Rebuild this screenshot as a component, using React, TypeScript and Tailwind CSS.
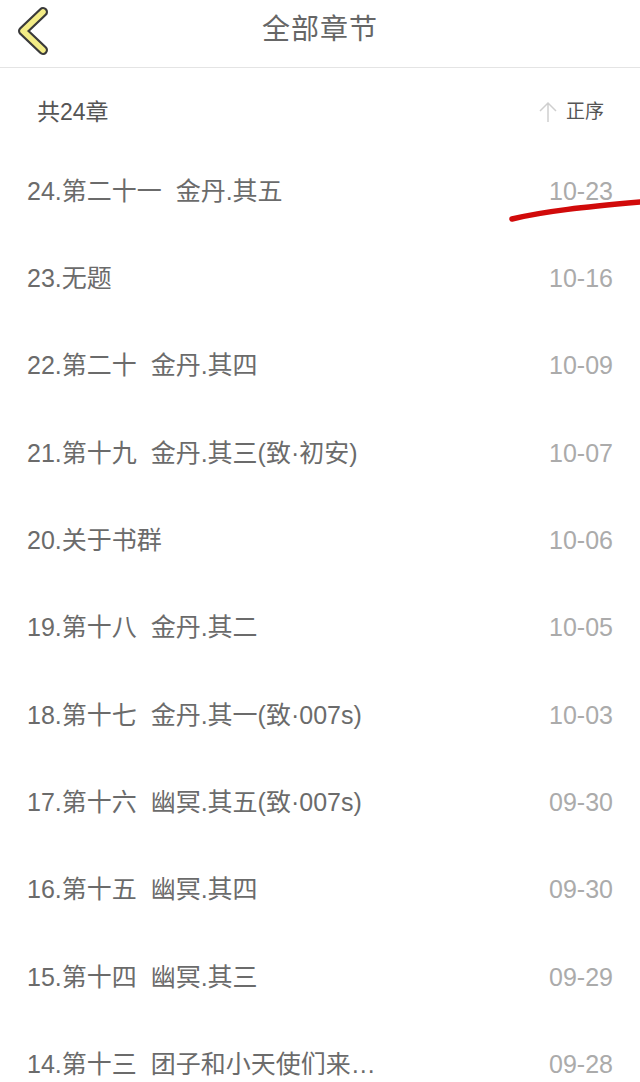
import { useState } from "react";

type Chapter = {
  id: number;
  title: string;
  date: string;
};

const chapters: Chapter[] = [
  { id: 24, title: "24.第二十一  金丹.其五", date: "10-23" },
  { id: 23, title: "23.无题", date: "10-16" },
  { id: 22, title: "22.第二十  金丹.其四", date: "10-09" },
  { id: 21, title: "21.第十九  金丹.其三(致·初安)", date: "10-07" },
  { id: 20, title: "20.关于书群", date: "10-06" },
  { id: 19, title: "19.第十八  金丹.其二", date: "10-05" },
  { id: 18, title: "18.第十七  金丹.其一(致·007s)", date: "10-03" },
  { id: 17, title: "17.第十六  幽冥.其五(致·007s)", date: "09-30" },
  { id: 16, title: "16.第十五  幽冥.其四", date: "09-30" },
  { id: 15, title: "15.第十四  幽冥.其三", date: "09-29" },
  { id: 14, title: "14.第十三  团子和小天使们来…", date: "09-28" },
];

const font = {
  fontFamily: '"Liberation Sans", "Noto Sans CJK SC", sans-serif',
};

const App = () => {
  const [asc, setAsc] = useState(true);

  return (
    <div className="relative w-[640px] h-[1082px] overflow-hidden bg-white" style={font}>
      <div className="relative h-[68px] flex items-center justify-center border-b border-[#e4e4e4]">
        <button className="absolute left-[12px] top-[4px] w-[44px] h-[52px]">
          <svg width="44" height="52" viewBox="0 0 44 52">
            <path
              d="M31 8 L11 27 L31 46"
              fill="none"
              stroke="#3a3a3a"
              strokeWidth="10"
              strokeLinecap="round"
              strokeLinejoin="round"
            />
            <path
              d="M31 8 L11 27 L31 46"
              fill="none"
              stroke="#f3ec86"
              strokeWidth="5.5"
              strokeLinecap="round"
              strokeLinejoin="round"
            />
          </svg>
        </button>
        <h1 className="text-[28px] text-[#666] mt-[-8px] tracking-[1px]">全部章节</h1>
      </div>

      <div className="h-[80px] flex items-center justify-between pt-[8px] pl-[37px] pr-[36px]">
        <span className="text-[23px] text-[#555]">共24章</span>
        <div className="flex items-center gap-[8px] cursor-pointer" onClick={() => setAsc(!asc)}>
          <svg width="20" height="22" viewBox="0 0 20 22">
            <path d="M10 2 V21 M2 10 L10 2 L18 10" fill="none" stroke="#cfcfcf" strokeWidth="1.5" />
          </svg>
          <span className="text-[19px] text-[#555]">{asc ? "正序" : "倒序"}</span>
        </div>
      </div>

      <ul className="flex flex-col">
        {chapters.map((c) => (
          <li key={c.id} className="h-[87.3px] flex items-center justify-between pl-[27px] pr-[27px]">
            <span className="text-[25px] text-[#6b6b6b] whitespace-pre">{c.title}</span>
            <span className="text-[25px] text-[#ababab]">{c.date}</span>
          </li>
        ))}
      </ul>

      <svg className="absolute left-0 top-0 pointer-events-none" width="640" height="1082">
        <path
          d="M512 219 C545 211 585 207 640 202"
          fill="none"
          stroke="#d10a0a"
          strokeWidth="5.5"
          strokeLinecap="round"
        />
      </svg>
    </div>
  );
};

export default App;
